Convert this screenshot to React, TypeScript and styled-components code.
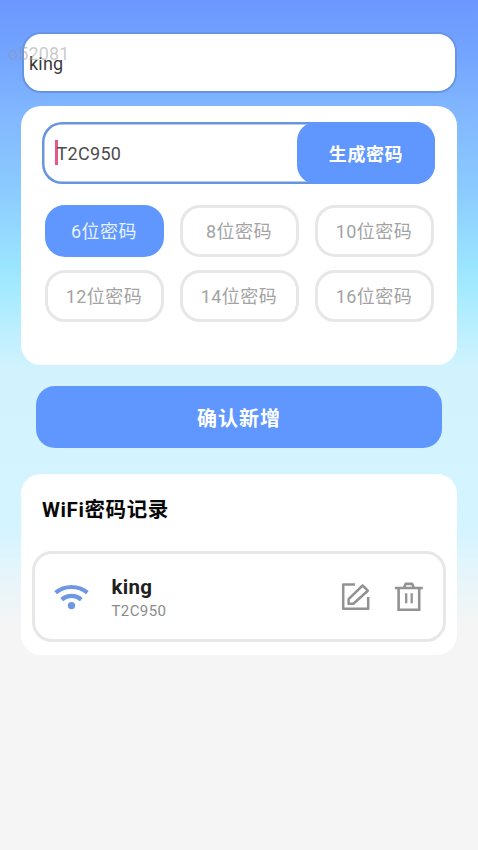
import React, { useState } from "react";
import styled, { createGlobalStyle } from "styled-components";

const BLUE = "#5f97fe";
const LINE = "#e7e7e7";

const GlobalStyle = createGlobalStyle`
  *, *::before, *::after { box-sizing: border-box; }
  body {
    margin: 0;
    background: #f5f5f5;
    font-family: Roboto, "Noto Sans CJK SC", sans-serif;
    -webkit-font-smoothing: antialiased;
  }
  button, input { font-family: inherit; }
`;

const Page = styled.main`
  position: relative;
  display: flex;
  flex-direction: column;
  width: 478px;
  height: 850px;
  padding: 32px 21px 0;
  overflow: hidden;
  background: linear-gradient(
    180deg,
    #6b97ff 0px,
    #74a6ff 60px,
    #81b6ff 110px,
    #8bcbff 190px,
    #9be4ff 265px,
    #a5eaff 290px,
    #d2f3fe 370px,
    #d4f4ff 530px,
    #e4f5fb 570px,
    #f5f5f5 625px
  );
`;

const Watermark = styled.span`
  position: absolute;
  left: 8px;
  top: 43px;
  font-size: 18px;
  line-height: 21px;
  letter-spacing: 0.1px;
  color: rgba(150, 150, 150, 0.5);
  pointer-events: none;
`;

const NameInput = styled.input`
  flex: none;
  width: 435px;
  height: 61px;
  margin: 0 0 13px 0.5px;
  padding: 2px 5.5px 0;
  border: 2px solid #6795e6;
  border-radius: 19px;
  background: #fff;
  color: #3a3a3a;
  font-size: 18px;
  letter-spacing: 0.2px;
  outline: none;
`;

const Card = styled.section<{ $height: number }>`
  flex: none;
  display: flex;
  flex-direction: column;
  height: ${(p) => p.$height}px;
  border-radius: 20px;
  background: #fff;
`;

const PasswordField = styled.div`
  display: flex;
  width: 393px;
  height: 62px;
  margin: 16px 0 0 21px;
  border-radius: 20px;
  box-shadow: inset 0 0 0 2.5px #6795e0;
`;

const PasswordValue = styled.div`
  display: flex;
  align-items: center;
  flex: 1;
  padding-left: 13px;
  color: #4c4c4c;
  font-size: 18px;
  letter-spacing: 0.3px;
`;

const Caret = styled.i`
  width: 3px;
  height: 25px;
  margin: -2px -1.5px 0 0;
  background: #e6578a;
`;

const GenerateButton = styled.button`
  width: 138px;
  padding: 0;
  border: 0;
  border-radius: 19px;
  background: ${BLUE};
  color: #fff;
  font-size: 18px;
  font-weight: 700;
  letter-spacing: 0.6px;
`;

const Options = styled.div`
  display: grid;
  grid-template-columns: repeat(3, 119px);
  grid-auto-rows: 52px;
  gap: 13px 16px;
  margin: 21px 0 0 24px;
`;

const Option = styled.button<{ $active: boolean }>`
  padding: 0 1px 2px 0;
  border: 3px solid ${(p) => (p.$active ? BLUE : LINE)};
  border-radius: 20px;
  background: ${(p) => (p.$active ? BLUE : "#fff")};
  color: ${(p) => (p.$active ? "#e7f2ff" : "#a3a3a3")};
  font-size: 18px;
  letter-spacing: 0.5px;
`;

const ConfirmButton = styled.button`
  flex: none;
  height: 62px;
  margin: 21px 15px 26px;
  padding: 0;
  border: 0;
  border-radius: 19px;
  background: ${BLUE};
  color: #fff;
  font-size: 20px;
  font-weight: 700;
  letter-spacing: 1px;
`;

const Title = styled.h2`
  margin: 21px 0 0 21px;
  color: #080808;
  font-size: 20.5px;
  line-height: 30px;
  font-weight: 700;
  letter-spacing: 0.6px;
`;

const Record = styled.article`
  display: flex;
  align-items: center;
  width: 414px;
  height: 91px;
  margin: 26px 0 0 11px;
  padding: 0 18px 0 19px;
  border: 3px solid ${LINE};
  border-radius: 20px;
`;

const RecordText = styled.div`
  display: flex;
  flex: 1;
  flex-direction: column;
  margin: 4px 0 0 21.5px;
`;

const RecordName = styled.strong`
  color: #202020;
  font-size: 20.5px;
  line-height: 26px;
  font-weight: 700;
  letter-spacing: 0.3px;
`;

const RecordPassword = styled.span`
  color: #8b8b8b;
  font-size: 15px;
  line-height: 23px;
  letter-spacing: 0.4px;
`;

const IconButton = styled.button`
  display: flex;
  margin-left: 22px;
  padding: 0;
  border: 0;
  background: none;
  color: #929292;
`;

const WifiIcon = () => (
  <svg width="36" height="28" viewBox="0 0 36 28" fill="none" stroke="#6e97e4" strokeWidth="4.2">
    <path d="M1.6 9.7C10.6 2.1 24.4 2.1 33.4 9.7" />
    <path d="M7.7 16.6C13.5 11.7 21.5 11.7 27.3 16.6" />
    <circle cx="17.5" cy="22.6" r="3.7" fill="#6e97e4" stroke="none" />
  </svg>
);

const EditIcon = () => (
  <svg width="32" height="32" viewBox="0 0 32 32" fill="none" stroke="currentColor" strokeWidth="2.5" strokeLinejoin="round">
    <path d="M16 3.5H4.2V27.7H29.2V16" />
    <path d="M23.6 4.5L28.8 9.7L14.4 22.7H9.6V18.1Z" />
  </svg>
);

const TrashIcon = () => (
  <svg width="32" height="32" viewBox="0 0 32 32" fill="none" stroke="currentColor" strokeWidth="2.6">
    <path d="M1.8 7H29.8M5.6 7V28.7H26.2V7" />
    <path d="M11.2 6.5L12.6 2.9H19.2L20.6 6.5" strokeLinejoin="round" />
    <path d="M13.2 12.2V22.2M18.7 12.2V22.2" strokeWidth="2.3" />
  </svg>
);

const LENGTHS = [6, 8, 10, 12, 14, 16];

export default function App() {
  const [name, setName] = useState("king");
  const [length, setLength] = useState(6);

  return (
    <>
      <GlobalStyle />
      <Page>
        <NameInput value={name} onChange={(e) => setName(e.target.value)} />
        <Card $height={259}>
          <PasswordField>
            <PasswordValue>
              <Caret />
              T2C950
            </PasswordValue>
            <GenerateButton>生成密码</GenerateButton>
          </PasswordField>
          <Options>
            {LENGTHS.map((n) => (
              <Option key={n} $active={n === length} onClick={() => setLength(n)}>
                {n}位密码
              </Option>
            ))}
          </Options>
        </Card>
        <ConfirmButton>确认新增</ConfirmButton>
        <Card $height={181}>
          <Title>WiFi密码记录</Title>
          <Record>
            <WifiIcon />
            <RecordText>
              <RecordName>king</RecordName>
              <RecordPassword>T2C950</RecordPassword>
            </RecordText>
            <IconButton aria-label="编辑">
              <EditIcon />
            </IconButton>
            <IconButton aria-label="删除">
              <TrashIcon />
            </IconButton>
          </Record>
        </Card>
        <Watermark>o52081</Watermark>
      </Page>
    </>
  );
}
